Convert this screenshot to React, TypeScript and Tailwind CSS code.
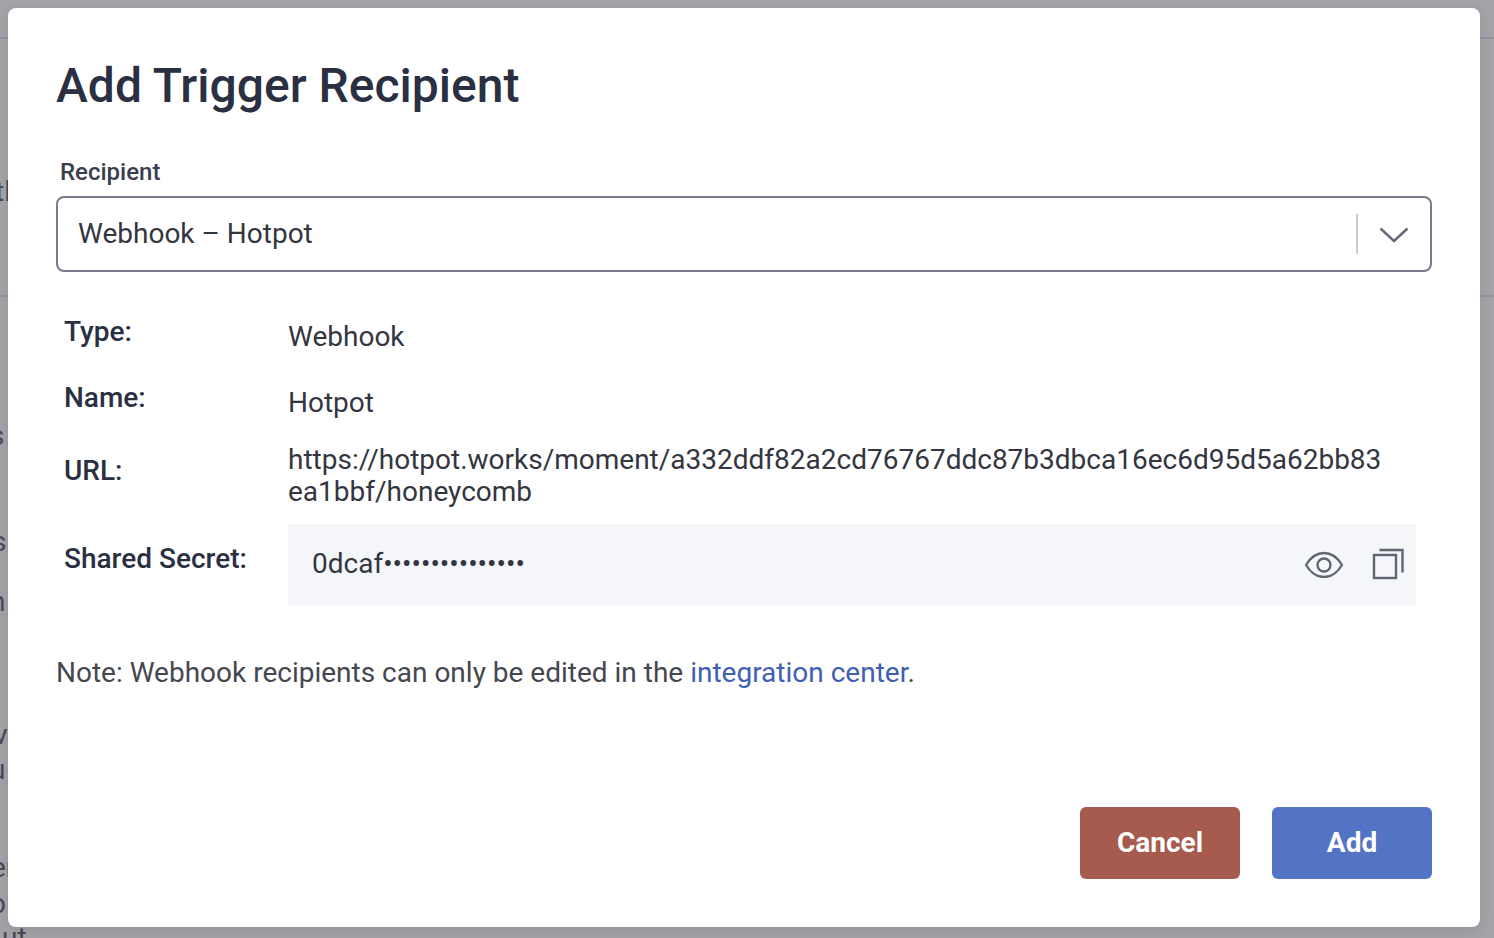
const backdropLetters = [
  { text: "tl", top: "top-[176px]", left: "-left-[5px]" },
  { text: "s", top: "top-[420px]", left: "-left-[10px]" },
  { text: "s", top: "top-[526px]", left: "-left-[8px]" },
  { text: "n", top: "top-[586px]", left: "-left-[10px]" },
  { text: "v", top: "top-[719px]", left: "-left-[6px]" },
  { text: "u", top: "top-[754px]", left: "-left-[10px]" },
  { text: "er", top: "top-[852px]", left: "-left-[9px]" },
  { text: "o", top: "top-[888px]", left: "-left-[10px]" },
  { text: "ut", top: "top-[922px]", left: "left-[2px]" },
];

function DetailRow({
  label,
  children,
  labelClass,
}: {
  label: string;
  children: React.ReactNode;
  labelClass?: string;
}) {
  return (
    <div className="flex items-start">
      <div className={`w-[232px] shrink-0 pl-2 text-[28px] leading-8 font-medium text-[#2a3042] ${labelClass ?? ""}`}>
        {label}
      </div>
      <div className="min-w-0 flex-1 text-[28px] leading-8 text-[#33363f]">{children}</div>
    </div>
  );
}

function EyeIcon() {
  return (
    <svg className="h-7 w-10 text-[#616572]" fill="none" stroke="currentColor" strokeWidth="2.3" viewBox="0 0 40 28">
      <path d="M2 15C6.500 7.500 12.500 3 20 3s13.500 4.500 18 12c-4.500 7.500-10.500 12-18 12S6.500 22.500 2 15Z" />
      <circle cx="20" cy="15" r="6.500" />
    </svg>
  );
}

function CopyIcon() {
  return (
    <svg className="h-8 w-8 text-[#616572]" fill="none" stroke="currentColor" strokeWidth="2.400" viewBox="0 0 32 32">
      <rect x="2" y="7" width="22" height="23" />
      <path d="M7.500 2H30.500V24.500" />
    </svg>
  );
}

export default function App() {
  return (
    <div className="relative h-[938px] w-[1494px] overflow-hidden bg-[#a3a3a8] p-2 font-['Roboto',sans-serif]">
      {/* page behind the dialog, dimmed */}
      <div className="absolute inset-x-0 top-[37px] h-[2px] bg-[#93949e]" />
      <div className="absolute inset-x-0 top-[295px] h-[2px] bg-[#93949e]" />
      {backdropLetters.map((item) => (
        <span
          className={`absolute text-[28px] leading-8 text-[#4a4b55] ${item.top} ${item.left}`}
          key={item.top}
        >
          {item.text}
        </span>
      ))}

      <div className="relative flex h-[919px] w-[1472px] flex-col rounded-lg bg-white px-12 shadow-[0_4px_14px_rgb(0_0_0_/_0.1)]">
        <h1 className="mt-[48px] text-[48px] leading-[60px] font-medium text-[#2a3042]">
          Add Trigger Recipient
        </h1>

        <label className="mt-[40px] pl-1 text-2xl leading-8 font-medium text-[#3a3e4c]">Recipient</label>
        <div className="mt-2 flex h-[76px] items-center rounded-lg border-2 border-[#777b8b] pl-5">
          <span className="flex-1 text-[28px] text-[#33363f]">Webhook – Hotpot</span>
          <span className="h-10 w-0.5 bg-[#cccccc]" />
          <svg className="mx-[21px] mt-0.5 h-4 w-[30px] text-[#666a78]" fill="none" stroke="currentColor" strokeWidth="2.400" viewBox="0 0 30 16">
            <path d="M1.500 1.500 15 14 28.500 1.500" />
          </svg>
        </div>

        <div className="mt-[49px] flex flex-col">
          <DetailRow label="Type:" labelClass="-mt-[5px]">
            Webhook
          </DetailRow>
          <div className="h-[34px]" />
          <DetailRow label="Name:" labelClass="-mt-[5px]">
            Hotpot
          </DetailRow>
          <div className="h-[25px]" />
          <DetailRow label="URL:" labelClass="mt-[11px]">
            <div className="w-[1096px] break-all">
              https://hotpot.works/moment/a332ddf82a2cd76767ddc87b3dbca16ec6d95d5a62bb83ea1bbf/honeycomb
            </div>
          </DetailRow>
          <div className="h-[16px]" />
          <div className="flex items-start">
            <div className="mt-[19px] w-[232px] shrink-0 pl-2 text-[28px] leading-8 font-medium text-[#2a3042]">
              Shared Secret:
            </div>
            <div className="flex h-[81px] w-[1128px] items-center gap-7 bg-[#f5f6fa] pr-3 pb-0.5 pl-6 text-[28px] text-[#33363f]">
              <span className="flex-1">0dcaf•••••••••••••••</span>
              <EyeIcon />
              <CopyIcon />
            </div>
          </div>
        </div>

        <p className="mt-[52px] text-[28px] leading-8 text-[#45474f]">
          Note: Webhook recipients can only be edited in the{" "}
          <a className="text-[#3f5fb5]" href="#integration-center">
            integration center
          </a>
          <span className="text-[#45474f]">.</span>
        </p>

        <div className="mt-auto mb-[48px] flex justify-end gap-8">
          <button className="h-[72px] w-40 rounded-md bg-[#a65b4e] text-[28px] font-bold text-white">Cancel</button>
          <button className="h-[72px] w-40 rounded-md bg-[#5373c5] text-[28px] font-bold text-white">Add</button>
        </div>
      </div>
    </div>
  );
}
